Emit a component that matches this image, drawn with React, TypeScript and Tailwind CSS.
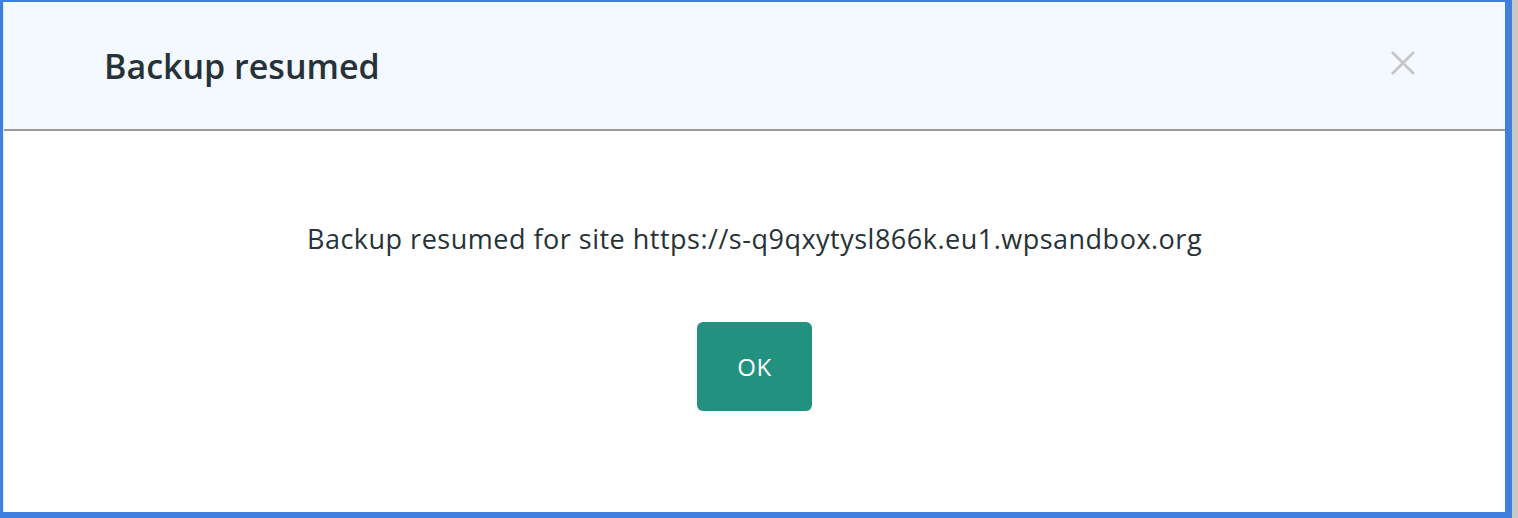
export default function App() {
    return (
        <div className="w-[1518px] h-[518px] bg-[#c8c8c8] flex overflow-hidden" style={{ fontFamily: '"Open Sans", "Noto Sans", sans-serif' }}>
            <div className="w-[1512px] h-[518px] bg-[#3f7fde] pl-[3px] pt-[2px] pr-[7px] pb-[6px] flex">
                <div className="flex-1 flex flex-col bg-white border-l border-[#dfe9fb]">
                    <div className="h-[129px] bg-[#f4f8ff] border-b-2 border-[#9a9a9a] flex items-center justify-between pl-[100px] pr-[90px]">
                        <h2 className="text-[34px] font-semibold text-[#263238] leading-none">Backup resumed</h2>
                        <button className="w-6 h-6 mb-[6px] flex items-center justify-center">
                            <svg width="24" height="24" viewBox="0 0 24 24" fill="none" stroke="#c6c6c6" strokeWidth="2.6">
                                <path d="M1 1 L23 23 M23 1 L1 23" />
                            </svg>
                        </button>
                    </div>
                    <div className="flex-1 flex flex-col items-center pt-[90px]">
                        <p className="text-[27px] leading-[36px] tracking-[0.5px] text-[#263238]">
                            Backup resumed for site https://s-q9qxytysl866k.eu1.wpsandbox.org
                        </p>
                        <button className="mt-[65px] w-[115px] h-[89px] rounded-md bg-[#22917f] text-white text-[24px] tracking-[0.5px]">
                            OK
                        </button>
                    </div>
                </div>
            </div>
        </div>
    );
}
